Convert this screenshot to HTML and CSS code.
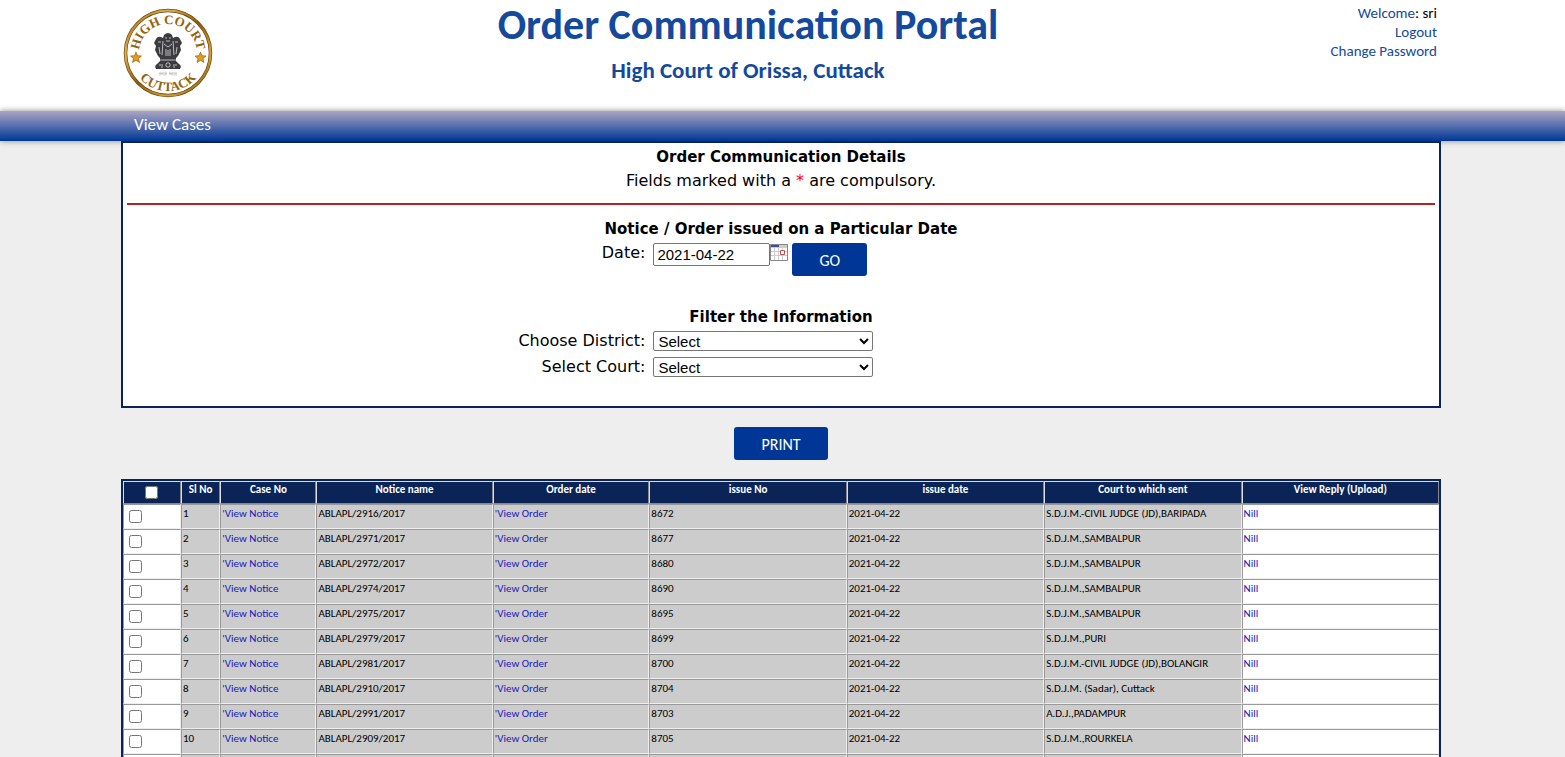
FILE: index.html
```
<!DOCTYPE html>
<html lang="en">

<head>
  <meta charset="UTF-8">
  <meta name="viewport" content="width=device-width, initial-scale=1.0">
  <title>Order Communication Portal</title>
  <link rel="stylesheet" href="styles.css">
</head>

<body>
  <header class="header">
    <div class="wrap header-row">
      <svg class="logo" viewBox="0 0 90 90" role="img" aria-label="High Court of Orissa seal">
        <defs>
          <linearGradient id="gold" x1="0" y1="0" x2="1" y2="1">
            <stop offset="0" stop-color="#8a5a08" />
            <stop offset="0.25" stop-color="#e0b050" />
            <stop offset="0.5" stop-color="#8a5a08" />
            <stop offset="0.75" stop-color="#d6a23c" />
            <stop offset="1" stop-color="#5e3c04" />
          </linearGradient>
          <path id="arc-top" d="M16 45a29 29 0 0 1 58 0" />
          <path id="arc-bottom" d="M7 45a38 38 0 0 0 76 0" />
        </defs>
        <circle cx="45" cy="45" r="42.5" fill="#fff" stroke="#6b4505" stroke-width="3.5" />
        <circle cx="45" cy="45" r="42.5" fill="none" stroke="url(#gold)" stroke-width="2.2" />
        <text class="logo-text"><textPath href="#arc-top" startOffset="50%">HIGH COURT</textPath></text>
        <text class="logo-text"><textPath href="#arc-bottom" startOffset="50%">CUTTACK</textPath></text>
        <path id="star" d="M13 44l1.500 3.700 4 .3-3 2.600 1 3.900-3.500-2.100-3.500 2.100 1-3.900-3-2.600 4-.3z" fill="#e09a1c" stroke="#8a5208" stroke-width=".6" />
        <use href="#star" x="64.500" />
        <g fill="#3c3c40">
          <path d="M41 27q4-4 8 0l1 3q5-3 7 1l2 4-2 3 1 4-3 6-3 3H38l-3-3-3-6 1-4-2-3 2-4q2-4 7-1z" />
          <path d="M37 50h16v3l3 3q3 2 1 5H33q-2-3 1-5l3-3z" />
        </g>
        <g fill="none" stroke="#c9c9cc" stroke-width=".9">
          <path d="M42 30h2M46 30h2M43 33h4M41 36l4 3 4-3M35 34h3M52 34h3M40 33l-1 14M50 33l1 14M36 39l1 7M54 39l-1 7M43 41v7M47 41v7M45 42v6M37 52h16" />
          <circle cx="45" cy="57" r="2.200" />
          <path d="M36 57h4M50 57h4M38 59h2M50 59h2" />
        </g>
        <path d="M36 65h8M46 65h8M37 65v2.500M39 65v2M41 66v1.500M43 65v2.500M47 65v2M49 65v2.500M51 66v1.500M53 65v2.500" stroke="#999" stroke-width=".6" />
      </svg>
      <div class="titles">
        <h1>Order Communication Portal</h1>
        <h2>High Court of Orissa, Cuttack</h2>
      </div>
      <div class="user">
        <div><a href="#">Welcome</a>: sri</div>
        <a href="#">Logout</a>
        <a href="#">Change Password</a>
      </div>
    </div>
  </header>

  <nav class="menu">
    <div class="wrap">
      <a href="#">View Cases</a>
    </div>
  </nav>

  <main class="wrap">
    <form class="details">
      <h3>Order Communication Details</h3>
      <p>Fields marked with a <span class="req">*</span> are compulsory.</p>
      <hr>
      <h3>Notice / Order issued on a Particular Date</h3>
      <div class="field field-date">
        <label for="date">Date:</label>
        <div class="date-group">
          <input type="text" id="date" value="2021-04-22">
          <button type="button" class="calendar" aria-label="Pick a date">
            <svg viewBox="0 0 18 17" width="18" height="17">
              <path d="M0 0h18v17H0z" fill="#fff" />
              <path d="M0 0h18v4H0z" fill="#ccc" />
              <path d="M1 1h8v2H1z" fill="#3a4ca8" />
              <path d="M4.500 4v12M8.500 4v12M12.500 4v12M1 7.500h16M1 11.500h16" stroke="#ccc" />
              <path d="M.5.5h17v16H.5z" fill="none" stroke="#888" />
              <path d="M10.500 6.500h4v4h-4z" fill="#fff" stroke="#c0504d" />
            </svg>
          </button>
          <button type="button" class="btn">GO</button>
        </div>
      </div>
      <h3 class="filter-title">Filter the Information</h3>
      <div class="field">
        <label for="district">Choose District:</label>
        <select id="district">
          <option>Select</option>
        </select>
      </div>
      <div class="field">
        <label for="court">Select Court:</label>
        <select id="court">
          <option>Select</option>
        </select>
      </div>
    </form>

    <div class="print">
      <button type="button" class="btn">PRINT</button>
    </div>

    <table class="cases">
      <colgroup>
        <col class="col-check">
        <col class="col-sl">
        <col class="col-case">
        <col class="col-notice">
        <col class="col-order">
        <col span="4" class="col-wide">
      </colgroup>
      <thead>
        <tr>
          <th><input type="checkbox" aria-label="Select all"></th>
          <th>Sl No</th>
          <th>Case No</th>
          <th>Notice name</th>
          <th>Order date</th>
          <th>issue No</th>
          <th>issue date</th>
          <th>Court to which sent</th>
          <th>View Reply (Upload)</th>
        </tr>
      </thead>
      <tbody>
        <tr>
          <td><input type="checkbox" aria-label="Select row 1"></td>
          <td>1</td>
          <td><a href="#">'View Notice</a></td>
          <td>ABLAPL/2916/2017</td>
          <td><a href="#">'View Order</a></td>
          <td>8672</td>
          <td>2021-04-22</td>
          <td>S.D.J.M.-CIVIL JUDGE (JD),BARIPADA</td>
          <td><a href="#">Nill</a></td>
        </tr>
        <tr>
          <td><input type="checkbox" aria-label="Select row 2"></td>
          <td>2</td>
          <td><a href="#">'View Notice</a></td>
          <td>ABLAPL/2971/2017</td>
          <td><a href="#">'View Order</a></td>
          <td>8677</td>
          <td>2021-04-22</td>
          <td>S.D.J.M.,SAMBALPUR</td>
          <td><a href="#">Nill</a></td>
        </tr>
        <tr>
          <td><input type="checkbox" aria-label="Select row 3"></td>
          <td>3</td>
          <td><a href="#">'View Notice</a></td>
          <td>ABLAPL/2972/2017</td>
          <td><a href="#">'View Order</a></td>
          <td>8680</td>
          <td>2021-04-22</td>
          <td>S.D.J.M.,SAMBALPUR</td>
          <td><a href="#">Nill</a></td>
        </tr>
        <tr>
          <td><input type="checkbox" aria-label="Select row 4"></td>
          <td>4</td>
          <td><a href="#">'View Notice</a></td>
          <td>ABLAPL/2974/2017</td>
          <td><a href="#">'View Order</a></td>
          <td>8690</td>
          <td>2021-04-22</td>
          <td>S.D.J.M.,SAMBALPUR</td>
          <td><a href="#">Nill</a></td>
        </tr>
        <tr>
          <td><input type="checkbox" aria-label="Select row 5"></td>
          <td>5</td>
          <td><a href="#">'View Notice</a></td>
          <td>ABLAPL/2975/2017</td>
          <td><a href="#">'View Order</a></td>
          <td>8695</td>
          <td>2021-04-22</td>
          <td>S.D.J.M.,SAMBALPUR</td>
          <td><a href="#">Nill</a></td>
        </tr>
        <tr>
          <td><input type="checkbox" aria-label="Select row 6"></td>
          <td>6</td>
          <td><a href="#">'View Notice</a></td>
          <td>ABLAPL/2979/2017</td>
          <td><a href="#">'View Order</a></td>
          <td>8699</td>
          <td>2021-04-22</td>
          <td>S.D.J.M.,PURI</td>
          <td><a href="#">Nill</a></td>
        </tr>
        <tr>
          <td><input type="checkbox" aria-label="Select row 7"></td>
          <td>7</td>
          <td><a href="#">'View Notice</a></td>
          <td>ABLAPL/2981/2017</td>
          <td><a href="#">'View Order</a></td>
          <td>8700</td>
          <td>2021-04-22</td>
          <td>S.D.J.M.-CIVIL JUDGE (JD),BOLANGIR</td>
          <td><a href="#">Nill</a></td>
        </tr>
        <tr>
          <td><input type="checkbox" aria-label="Select row 8"></td>
          <td>8</td>
          <td><a href="#">'View Notice</a></td>
          <td>ABLAPL/2910/2017</td>
          <td><a href="#">'View Order</a></td>
          <td>8704</td>
          <td>2021-04-22</td>
          <td>S.D.J.M. (Sadar), Cuttack</td>
          <td><a href="#">Nill</a></td>
        </tr>
        <tr>
          <td><input type="checkbox" aria-label="Select row 9"></td>
          <td>9</td>
          <td><a href="#">'View Notice</a></td>
          <td>ABLAPL/2991/2017</td>
          <td><a href="#">'View Order</a></td>
          <td>8703</td>
          <td>2021-04-22</td>
          <td>A.D.J.,PADAMPUR</td>
          <td><a href="#">Nill</a></td>
        </tr>
        <tr>
          <td><input type="checkbox" aria-label="Select row 10"></td>
          <td>10</td>
          <td><a href="#">'View Notice</a></td>
          <td>ABLAPL/2909/2017</td>
          <td><a href="#">'View Order</a></td>
          <td>8705</td>
          <td>2021-04-22</td>
          <td>S.D.J.M.,ROURKELA</td>
          <td><a href="#">Nill</a></td>
        </tr>
        <tr>
          <td></td>
          <td></td>
          <td></td>
          <td></td>
          <td></td>
          <td></td>
          <td></td>
          <td></td>
          <td></td>
        </tr>
      </tbody>
    </table>
  </main>
</body>

</html>
```
FILE: styles.css
```
* {
  box-sizing: border-box;
}

body {
  margin: 0;
  height: 100vh;
  overflow: hidden;
  background-color: #eee;
  color: #000;
  font-family: Calibri, Carlito, Lato, sans-serif;
}

a {
  text-decoration: none;
}

.wrap {
  margin: 0 124px 0 121px;
}

/* Header */
.header {
  background: #fff;
  height: 111px;
}

.header-row {
  display: flex;
}

.logo {
  width: 90px;
  height: 90px;
  margin: 8px 0 0 2px;
}

.logo-text {
  font-family: "Liberation Serif", serif;
  font-size: 13px;
  font-weight: bold;
  fill: #94620e;
  text-anchor: middle;
}

.titles {
  flex: 1;
  text-align: center;
  color: #134a9c;
}

.titles h1 {
  margin: 0;
  font-size: 42px;
  line-height: 50px;
}

.titles h2 {
  margin: 5px 0 0;
  font-size: 23px;
  line-height: 30px;
}

.user {
  width: 158px;
  padding: 4px 4px 0 0;
  text-align: right;
  font-size: 15px;
  line-height: 19px;
}

.user a {
  color: #134a9c;
}

.user > a {
  display: block;
}

/* Menu */
.menu {
  position: relative;
  height: 30px;
  background: linear-gradient(#aaa5c4, #003797);
  box-shadow: 0 0 6px #888;
}

.menu a {
  display: inline-block;
  padding: 0 13px;
  color: #fff;
  font-size: 17px;
  line-height: 28px;
}

/* Search form */
.details {
  position: relative;
  height: 267px;
  padding: 2px 4px;
  border: 2px solid #0a2458;
  background: #fff;
  font-family: Verdana, "DejaVu Sans", sans-serif;
  font-size: 16px;
  line-height: 24px;
  text-align: center;
}

.details h3,
.details p {
  margin: 0;
}

.details h3 {
  font-size: 15px;
}

.details hr {
  margin: 10px 0 12px;
  border: 0;
  border-top: 2px solid #b22222;
}

.req {
  color: red;
}

.field {
  display: grid;
  grid-template-columns: 2fr 3fr;
  column-gap: 8px;
  height: 26px;
  padding-right: 4px;
  text-align: left;
}

.field label {
  text-align: right;
}

.date-group {
  display: flex;
  align-items: flex-start;
  padding-top: 2px;
}

.date-group input {
  width: 117px;
  height: 23px;
  padding: 1px 3px;
  border: 1px solid #767676;
  border-radius: 2px;
  font: 15px "Liberation Sans", Arial, sans-serif;
}

.calendar {
  width: 18px;
  height: 17px;
  margin: 1px 4px 0 0;
  padding: 0;
  border: 0;
  background: none;
  line-height: 0;
}

.field select {
  width: 220px;
  height: 20px;
  margin-top: 2px;
  border: 1px solid #767676;
  border-radius: 2px;
  background-color: #fff;
  color: #000;
  font: 15px "Liberation Sans", Arial, sans-serif;
}

.details .filter-title {
  margin-top: 38px;
}

.btn {
  height: 33px;
  padding: 2px 27px 0;
  border: 0;
  border-radius: 3px;
  background: #003797;
  color: #fff;
  font-family: Calibri, Carlito, Lato, sans-serif;
  font-size: 16px;
  cursor: pointer;
}

.print {
  padding: 19px 0;
  text-align: center;
  line-height: 0;
}

/* Cases table */
.cases {
  width: 100%;
  table-layout: fixed;
  border: 2px solid #0a2458;
  border-spacing: 0;
  font-size: 11px;
  line-height: 14px;
}

.cases th,
.cases td {
  height: 25px;
  padding: 2px 1px 0;
  border: 1px solid;
  border-color: #999 #eee #eee #999;
  vertical-align: top;
  white-space: nowrap;
}

.cases th {
  height: 23px;
  padding-top: 1px;
  background: #0a2458;
  color: #fff;
  border-color: #ddd #888 #888 #ddd;
}

.cases td {
  background: #ccc;
}

.cases td:first-child,
.cases td:last-child {
  background: #fff;
}

.cases a {
  color: #1a1ab8;
}

.cases input {
  display: block;
  width: 13px;
  height: 13px;
  margin: 3px 0 0 4px;
}

.cases th input {
  margin: 3px auto 0;
}

.col-check {
  width: 4.4%;
}

.col-sl {
  width: 3%;
}

.col-case {
  width: 7.3%;
}

.col-notice {
  width: 13.4%;
}

.col-order {
  width: 11.9%;
}

.col-wide {
  width: 15%;
}
```
